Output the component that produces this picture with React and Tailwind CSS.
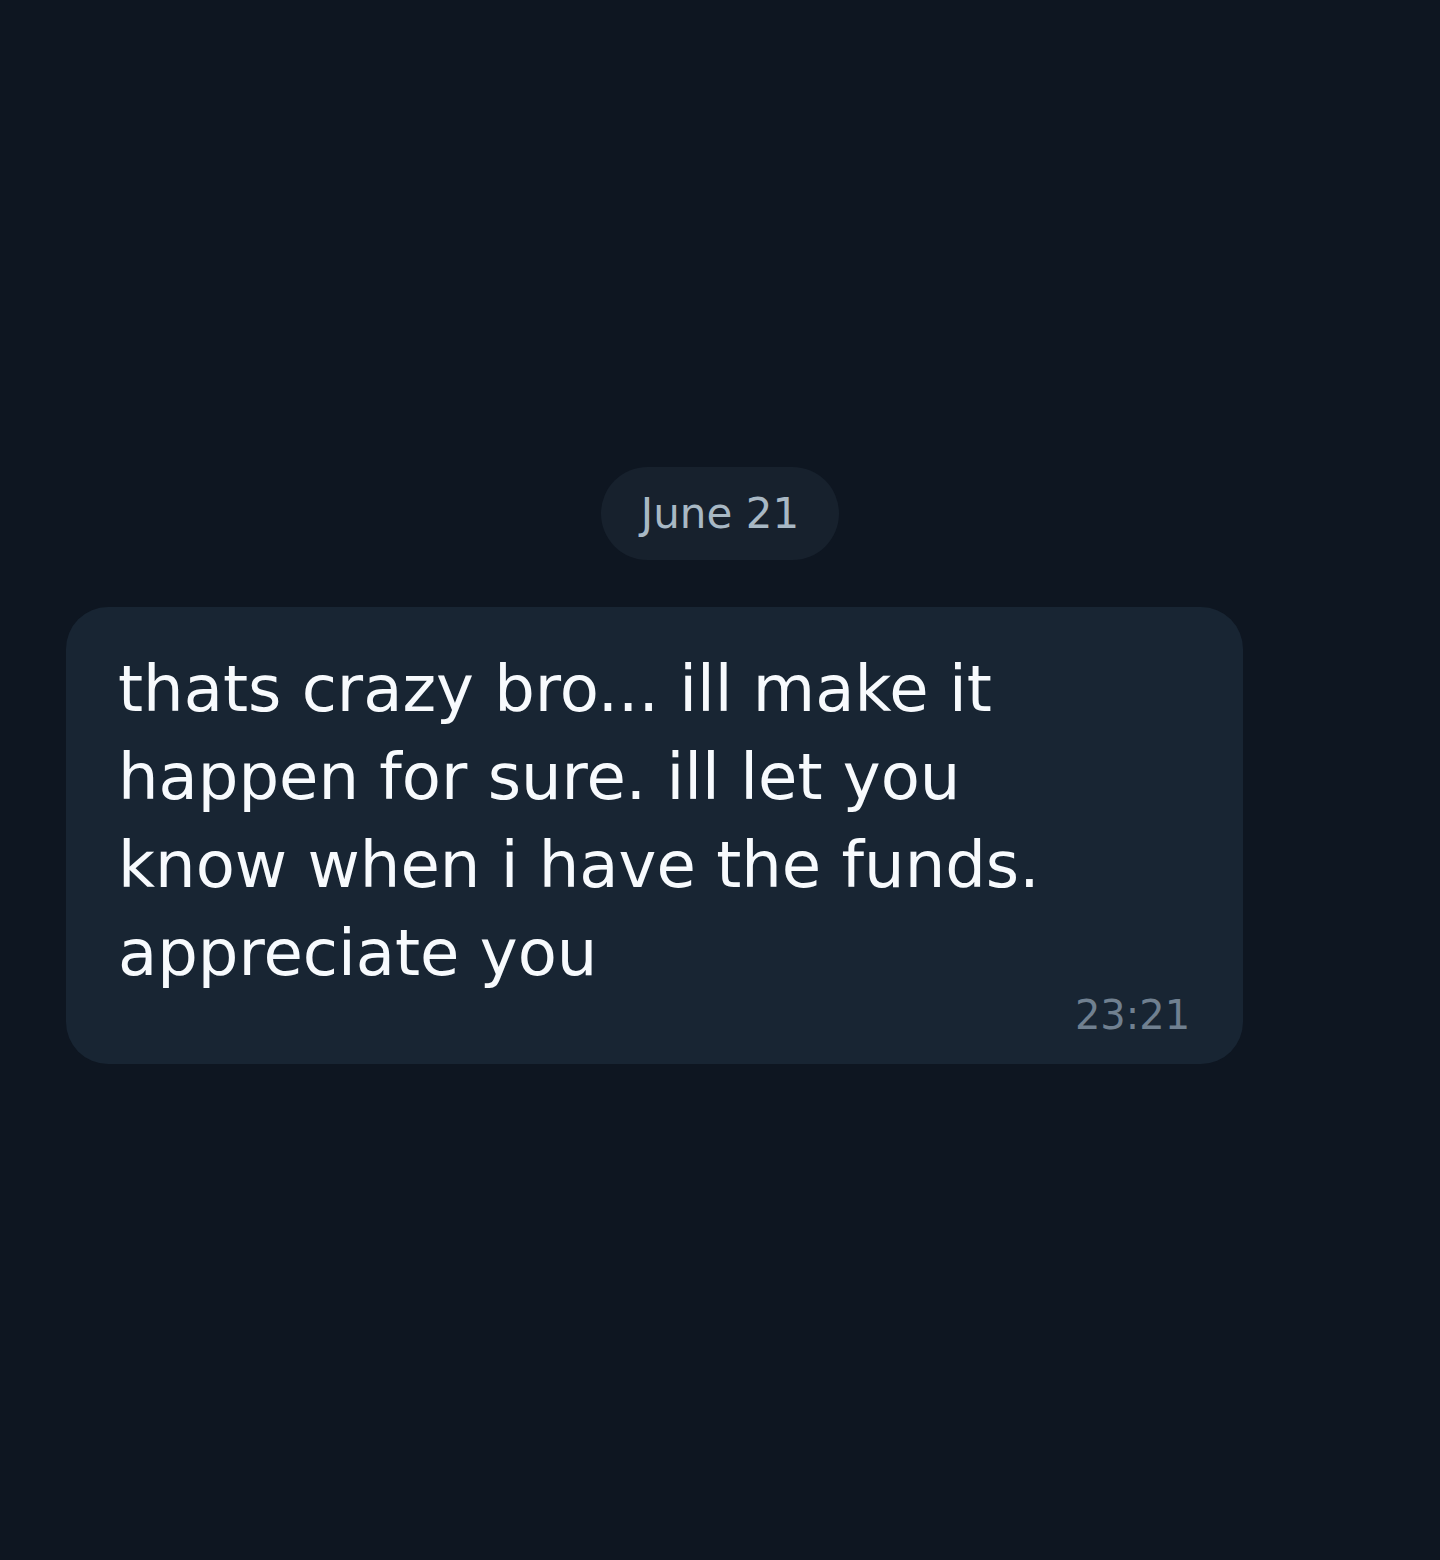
export default function App() {
  return (
    <main className="flex min-h-screen flex-col justify-center bg-[#0e1621] px-[66px] pb-[29px] font-['DejaVu_Sans',sans-serif]">
      <time className="mb-[47px] self-center rounded-full bg-[#17212d] px-10 py-[21px] text-[42px] leading-[51px] text-[#a8b8c4]">
        June 21
      </time>
      <article className="flex w-[90%] flex-col rounded-[42px] bg-[#182533] pt-[38px] pr-[53px] pb-[31px] pl-[52px]">
        <p className="max-w-[960px] text-[64px] leading-[88px] text-[#f7fafd]">
          thats crazy bro... ill make it happen for sure. ill let you know when i have the funds. appreciate you
        </p>
        <time className="self-end text-[40px] leading-[36px] text-[#708090]">23:21</time>
      </article>
    </main>
  );
}
